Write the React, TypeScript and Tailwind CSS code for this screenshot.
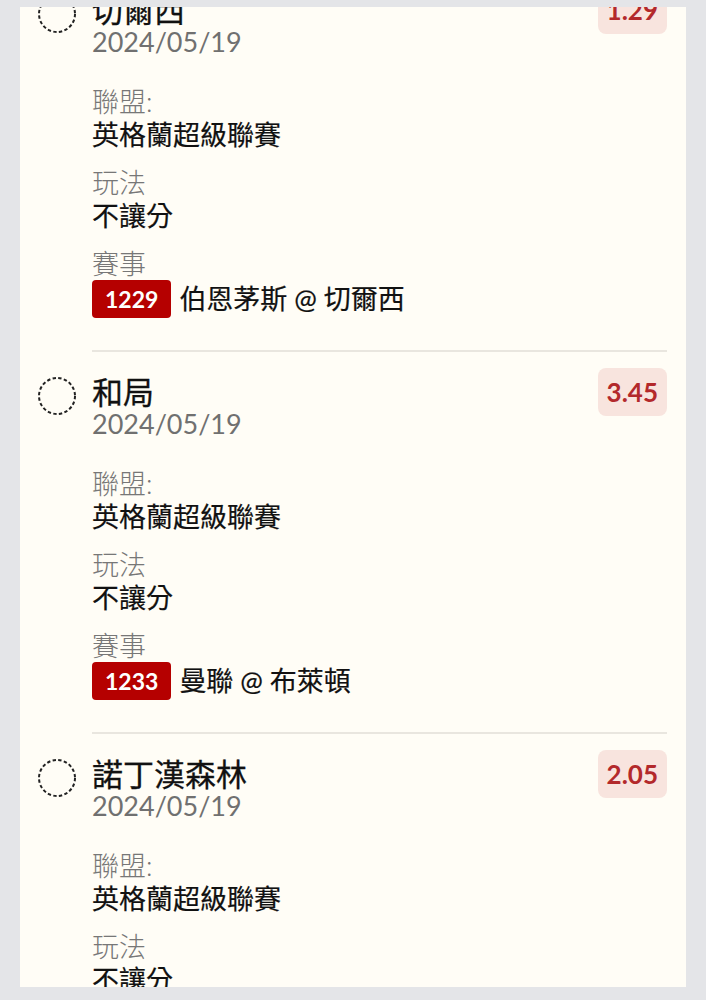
import React from 'react';

interface Bet {
  pick: string;
  date: string;
  odds: string;
  league: string;
  market: string;
  matchNo: string;
  match: string;
}

const bets: Bet[] = [
  { pick: '切爾西', date: '2024/05/19', odds: '1.29', league: '英格蘭超級聯賽', market: '不讓分', matchNo: '1229', match: '伯恩茅斯 @ 切爾西' },
  { pick: '和局', date: '2024/05/19', odds: '3.45', league: '英格蘭超級聯賽', market: '不讓分', matchNo: '1233', match: '曼聯 @ 布萊頓' },
  { pick: '諾丁漢森林', date: '2024/05/19', odds: '2.05', league: '英格蘭超級聯賽', market: '不讓分', matchNo: '1235', match: '般尼 @ 諾丁漢森林' },
];

function DashedCircle() {
  return (
    <svg width="38" height="38" viewBox="0 0 38 38" fill="none">
      <circle cx="19" cy="19" r="18" stroke="#222" strokeWidth="2" strokeDasharray="3.4 2.3" />
    </svg>
  );
}

function Field({ label, children }: { label: string; children: React.ReactNode }) {
  return (
    <div>
      <div className="text-[27px] leading-[32px] font-light text-[#777]">{label}</div>
      {children}
    </div>
  );
}

function BetRow({ bet }: { bet: Bet }) {
  return (
    <div className="flex gap-4 pl-[18px] pr-[19px]">
      <div className="mt-[25px] h-[38px] w-[38px] shrink-0">
        <DashedCircle />
      </div>
      <div className="flex-1 pt-4">
        <div className="flex items-start justify-between">
          <div className="mt-[6px]">
            <div className="text-[31px] leading-[36px] text-[#111] [-webkit-text-stroke:0.3px_#111]">{bet.pick}</div>
            <div className="text-[27px] leading-[28px] text-[#707070]">{bet.date}</div>
          </div>
          <div className="flex h-[48px] items-center rounded-lg bg-[#f8e4de] px-[9px] text-[26px] font-bold text-[#b3292b]">
            {bet.odds}
          </div>
        </div>
        <div className="mt-[30px] flex flex-col gap-[15px]">
          <Field label="聯盟:">
            <div className="text-[27px] leading-[34px] text-[#111] [-webkit-text-stroke:0.2px_#111]">{bet.league}</div>
          </Field>
          <Field label="玩法">
            <div className="text-[27px] leading-[34px] text-[#111] [-webkit-text-stroke:0.2px_#111]">{bet.market}</div>
          </Field>
          <Field label="賽事">
            <div className="flex h-[38px] items-center gap-2">
              <span className="flex h-[38px] items-center rounded bg-[#b50000] px-[13px] text-[23px] font-bold text-white">
                {bet.matchNo}
              </span>
              <span className="text-[27px] leading-[34px] text-[#111] [-webkit-text-stroke:0.2px_#111]">{bet.match}</span>
            </div>
          </Field>
        </div>
        <div className="mt-8 h-[2px] bg-[#e9e6df]" />
      </div>
    </div>
  );
}

export default function App() {
  return (
    <div className="h-[1000px] overflow-hidden bg-[#e4e5e8] pt-[7px] font-['Lato','Noto_Sans_CJK_TC',sans-serif]">
      <div className="mx-[20px] h-[980px] overflow-hidden bg-[#fffdf6]">
        <div className="-mt-[37px]">
          {bets.map((b) => (
            <BetRow key={b.matchNo} bet={b} />
          ))}
        </div>
      </div>
    </div>
  );
}
